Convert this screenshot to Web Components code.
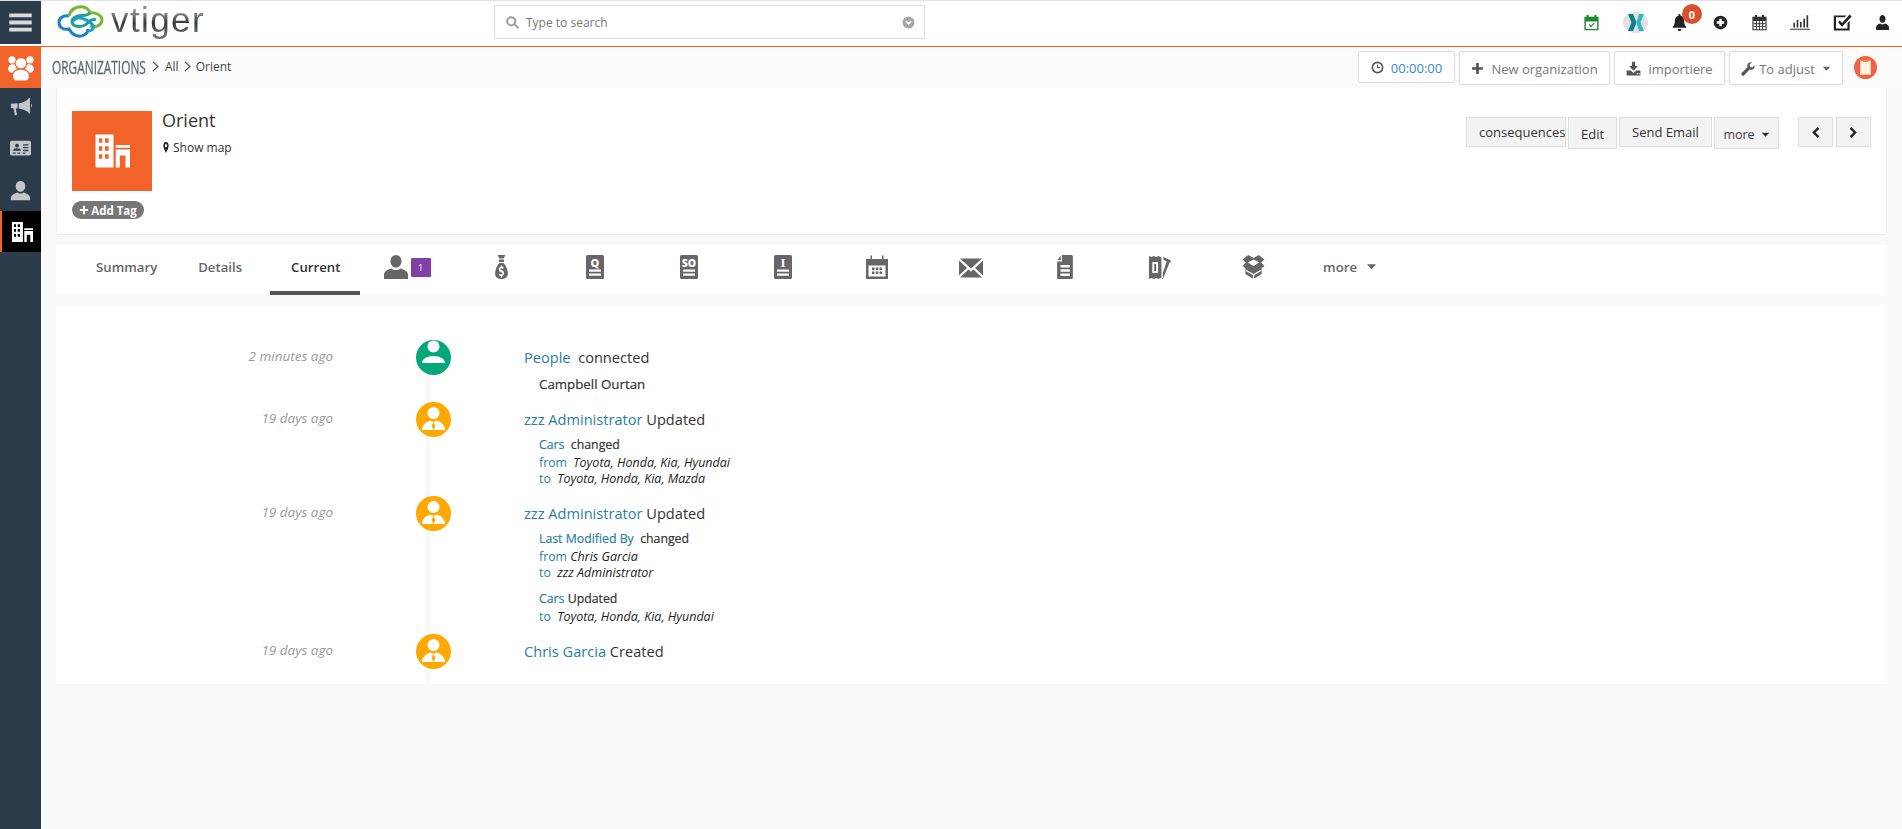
<!DOCTYPE html>
<html>
<head>
<meta charset="utf-8">
<title>Orient</title>
<style>
  html, body { margin: 0; padding: 0; height: 100%; background: #f9f9f9; overflow: hidden; }
  body { font-family: "Open Sans", "Liberation Sans", sans-serif; }
</style>
</head>
<body>
<vt-app></vt-app>
<script>
(function() {
  // icons are all drawn on a 24 box and use currentColor
  const ICONS = {
    user: '<path d="M12 1C8.600 1 6.500 3.800 6.500 7.200S8.700 13.500 12 13.500s5.500-2.900 5.500-6.300S15.400 1 12 1zM1 23v-2.500c0-3 3.500-5.200 7.300-6.300 1.100.7 2.300 1.100 3.700 1.100s2.600-.4 3.700-1.100c3.800 1.100 7.300 3.300 7.300 6.300V23z"/>',
    team: '<circle cx="12" cy="7.500" r="4.800"/><circle cx="3.700" cy="4.500" r="3.300"/><circle cx="20.300" cy="4.500" r="3.300"/><path d="M0 13c0-2.500 2-4.500 4.500-4.500.8 0 1.500.2 2 .4.300 1.700 1 3 2 3.800-1.700.8-3.500 2-4.500 4C1.700 16.200 0 14.700 0 13zM24 13c0-2.500-2-4.500-4.500-4.500-.8 0-1.500.2-2 .4-.3 1.700-1 3-2 3.800 1.700.8 3.500 2 4.500 4 2.300-.5 4-2 4-3.700zM4.700 19c0-3.500 3.300-5.500 7.300-5.500s7.300 2 7.300 5.500c0 3-1 4.500-3 4.500H7.700c-2 0-3-1.500-3-4.500z"/>',
    megaphone: '<path d="M20.500 2h1.300v17h-1.300l-.8-1.500C17 15.500 13 13.800 9.500 13.500v-5.500c3.500-.3 7.500-2 10.200-4.500zM23 8.500c1.300.5 1.300 3.500 0 4zM1 8.500l7.300-.5v5.500l-2 0L7.700 20.500 5.300 21 3.800 13.400 1 13z"/>',
    idcard: '<path fill-rule="evenodd" d="M2 3h20a2 2 0 0 1 2 2v13a2 2 0 0 1-2 2H2a2 2 0 0 1-2-2V5a2 2 0 0 1 2-2zm6 3.500a2.200 2.200 0 1 0 0 4.400 2.200 2.200 0 0 0 0-4.400zM3.500 14.500h9c0-2-2-2.900-4.500-2.900s-4.500.9-4.500 2.900zM15 7v1.600h6V7zm0 3.200v1.600h6v-1.600zm0 3.200V15h6v-1.600zM3.500 16.500V18h3v-1.500zm5 0V18h3v-1.500zm6 0V18h3v-1.500z"/>',
    building: '<path fill-rule="evenodd" d="M1 1h12v22H1zm2.300 2.500v3h2.200v-3zm4 0v3h2.500v-3zm-4 5.300v3h2.200v-3zm4 0v3h2.500v-3zm-4 5.300v3h2.200v-3zm4 0v3h2.500v-3zM14.500 8H24v1.800h-9.500zM14.500 11H24v12h-3v-8h-3.800v8h-2.700z"/>',
    bars: '<path d="M2 4h20v3.400H2zM2 10.300h20v3.400H2zM2 16.600h20V20H2z"/>',
    search: '<path d="M10 2a8 8 0 1 0 4.800 14.400l5.600 5.600 2.100-2.100-5.600-5.600A8 8 0 0 0 10 2zm0 3a5 5 0 1 1 0 10 5 5 0 0 1 0-10z"/>',
    chevdown: '<path fill-rule="evenodd" d="M12 1a11 11 0 1 0 0 22 11 11 0 0 0 0-22zM6 10.500l2.200-2.200 3.800 3.800 3.800-3.800 2.200 2.200-6 6z"/>',
    calcheck: '<path fill-rule="evenodd" d="M2 4h3V1.500h3V4h8V1.500h3V4h3v19H2zm2 6.500V21h16V10.500zM8 15.500l1.300-1.300 2 2 4-4 1.300 1.300-5.300 5.300z"/>',
    bell: '<path d="M12 0c.9 0 1.500.7 1.500 1.500V2.500c3.300.7 5 3.300 5 6.500 0 5 1.200 7 3 9v1.500h-19V18c1.800-2 3-4 3-9 0-3.200 1.700-5.800 5-6.500V1.500C10.500.7 11.100 0 12 0zM9.500 21h5c0 1.600-1.100 3-2.500 3S9.500 22.600 9.500 21z"/>',
    pluscircle: '<path fill-rule="evenodd" d="M12 1a11 11 0 1 0 0 22 11 11 0 0 0 0-22zM10 6h4v4h4v4h-4v4h-4v-4H6v-4h4z"/>',
    calendar: '<path fill-rule="evenodd" d="M2 4h3.500V1.500h3V4h7V1.500h3V4H22v19H2zm1.500 6v3h3.400v-3zm4.700 0v3h3.200v-3zm4.400 0v3h3.200v-3zm4.500 0v3h3.400v-3zM3.500 14.300v3h3.400v-3zm4.700 0v3h3.200v-3zm4.400 0v3h3.200v-3zm4.500 0v3h3.400v-3zM3.500 18.500v3h3.400v-3zm4.700 0v3h3.200v-3zm4.400 0v3h3.200v-3zm4.500 0v3h3.400v-3z"/>',
    chart: '<path d="M0 20h24v1.300H0zM4 13h2v5.500H4zM8 9.500h2v9H8zM12 12h2v6.500h-2zM16 8h2v10.500h-2zM19.800 4h2v14.500h-2z"/>',
    checkbox: '<path fill-rule="evenodd" d="M1 3h16l-2.200 2.500H3.800v14h14.500v-7l2.700-2.800V22H1zM8.500 9.500l3 3L21 2l2.500 2.300-12 13-5-5.500z"/>',
    person2: '<path d="M12 0C8.800 0 6.500 2.800 6.500 6.200s2.300 6.300 5.500 6.300 5.500-2.900 5.500-6.300S15.200 0 12 0zM0 24v-4.500c0-3 3.500-5 7.500-6 1.200 1 2.900 1.500 4.500 1.500s3.300-.5 4.500-1.500c4 1 7.500 3 7.500 6V24z"/>',
    clock: '<path fill-rule="evenodd" d="M12 1a11 11 0 1 0 0 22 11 11 0 0 0 0-22zm0 3a8 8 0 1 1 0 16 8 8 0 0 1 0-16zm-1 2.500V13h6v-2h-4V6.500z"/>',
    plus: '<path d="M9.500 2h5v7.500H22v5h-7.500V22h-5v-7.500H2v-5h7.500z"/>',
    download: '<path fill-rule="evenodd" d="M9.500 1h5v7H19l-7 7.500L5 8h4.500zM1 15h6.500l4.500 4 4.500-4H23v8H1zm16 4v2h2v-2zm3.200 0v2h1.500v-2z"/>',
    wrench: '<path d="M23 5.500c.8 3.200-.7 6.500-3.500 7.500-1.700.6-3.300.4-4.700-.3L5.500 22.500c-1.200 1.200-3 1.200-4.100 0-1.100-1.100-1.100-2.900.1-4l9.800-9.500c-.7-1.500-.8-3.200-.2-4.800C12.200 1.500 15.200 0 18.500.5L14.500 4.500l1 4 4 1z"/>',
    pin: '<path fill-rule="evenodd" d="M12 0C7.300 0 4 3.500 4 8c0 5 5 11 8 16 3-5 8-11 8-16 0-4.500-3.300-8-8-8zm0 4.500a3.500 3.500 0 1 1 0 7 3.500 3.500 0 0 1 0-7z"/>',
    left: '<path d="M16 2l3 3-7 7 7 7-3 3L6 12z"/>',
    right: '<path d="M8 2L5 5l7 7-7 7 3 3 10-10z"/>',
    bag: '<path fill-rule="evenodd" d="M6.500 0h11l-2.500 3.500h-6zM8.500 4.500h7V7h-7zM9 8h6c4 3 6 7.500 6 10.500S18 24 12 24s-9-2.500-9-5.500S5 11 9 8zm2 2.500v1.300c-1.700.3-2.800 1.300-2.800 2.800 0 1.700 1.500 2.300 3.800 3 1 .3 1.300.6 1.300 1s-.5.700-1.400.7c-1 0-2-.3-2.900-.9l-.8 1.600c.8.600 1.800.9 2.800 1v1.400h1.800v-1.500c1.800-.3 2.900-1.300 2.900-2.900 0-1.700-1.300-2.400-3.600-3.100-1.200-.4-1.500-.6-1.500-1s.4-.7 1.200-.7c.8 0 1.700.2 2.400.7l.8-1.600c-.7-.4-1.500-.7-2.300-.8v-1z"/>',
    mail: '<path d="M1 3.500h22L12 13.500zM0 5.500L8 13 0 20.500zM24 5.500L16 13l8 7.500zM9.500 14.500L12 16.800l2.500-2.300 8.500 8H1z"/>',
    file: '<path fill-rule="evenodd" d="M8 0h13a1.500 1.500 0 0 1 1.500 1.500v21A1.500 1.500 0 0 1 21 24H3a1.500 1.500 0 0 1-1.500-1.500V6.500H8zM6.500.5v4.500H2zM6 10v2.400h12.500V10zm0 4.300v2.400h12.500v-2.400zm0 4.300V21h12.500v-2.400z"/>',
    tabcal: '<path fill-rule="evenodd" d="M1 4h4.500V.5h1.500V4h10V.5h1.500V4H23v20H1zm2.500 6.500V21.500h17V10.500zM7 12.500h2.500V15H7zm3.800 0h2.500V15h-2.500zm3.700 0H17V15h-2.500zM7 16.500h2.500V19H7zm3.800 0h2.500V19h-2.500zm3.700 0H17V19h-2.500z"/>',
    ticket: '<path fill-rule="evenodd" d="M1 1l2.500 1L6 1l2.500 1L11 1l3 1.500v20L11 24l-2.500-1L6 24l-2.500-1L1 24zM4.500 7v11h6V7zm2 2h2v7h-2zM16 2l8 3.500-.8 2c-1 .3-1.500 1-1.500 2L15.500 24l-1.500 0 1.500-1V18l4-11.500L16 4.500z"/>',
    box: '<path fill-rule="evenodd" d="M6.500 0L12 3l5.500-3 6 4.500L20 7.500l3.500 3.500-3 2V19L12 24l-8.500-5v-6l-3-2L4 7.500.5 4.500zM12 4.500L6 7.500l6 3.500 6-3.500zM4 14.500v1.500l7.400 4.300V24h1.200v-3.700L20 16v-1.500l-8 4.600z"/>',
    caret: '<path d="M2 7h20L12 18z"/>'
  };

  class VtIcon extends HTMLElement {
    connectedCallback() {
      const size = this.getAttribute('size') || 16;
      const h = this.getAttribute('h') || size;
      const color = this.getAttribute('color') || 'currentColor';
      const root = this.attachShadow({ mode: 'open' });
      root.innerHTML = `
        <style>
          :host { display: inline-flex; line-height: 0; flex: none; color: ${color}; }
          svg { display: block; fill: currentColor; }
        </style>
        <svg width="${size}" height="${h}" viewBox="0 0 24 24" preserveAspectRatio="none">${ICONS[this.getAttribute('name')] || ''}</svg>`;
    }
  }

  // the small record icons of the tab strip which carry letters
  class VtRecordIcon extends HTMLElement {
    connectedCallback() {
      const font = this.getAttribute('font') || 'Open Sans';
      const root = this.attachShadow({ mode: 'open' });
      root.innerHTML = `
        <style>:host { display: inline-flex; flex: none; } svg { display: block; }</style>
        <svg width="18" height="24" viewBox="0 0 18 24">
          <rect width="18" height="24" rx="1.500" fill="#666"/>
          <text x="9" y="12" text-anchor="middle" font-family="${font}, sans-serif" font-weight="800" font-size="${this.getAttribute('fs') || 11}" fill="#fff">${this.getAttribute('letter')}</text>
          <rect x="3" y="14.500" width="12" height="2.200" fill="#fff"/>
          <rect x="3" y="18.500" width="12" height="2.200" fill="#fff"/>
        </svg>`;
    }
  }

  class VtLogo extends HTMLElement {
    connectedCallback() {
      const root = this.attachShadow({ mode: 'open' });
      root.innerHTML = `
        <style>
          :host { display: flex; align-items: flex-start; gap: 7px; }
          svg { display: block; }
          span {
            font: 400 35px "Liberation Sans", sans-serif;
            letter-spacing: 1.400px;
            background: linear-gradient(#8a8e92 30%, #33383c 58%, #6a6e72 85%);
            -webkit-background-clip: text; background-clip: text; color: transparent;
            display: block; margin-top: -3px;
          }
        </style>
        <svg width="47" height="36" viewBox="0 0 47 36" fill="none" stroke-width="3">
          <path d="M12 13C6 12 2 15 2 19.500 2 25 7 27 12 26c3 6 10 9 15 6 3-1.500 4-4 4-6" stroke="#1d7fc4"/>
          <path d="M12 13c1-6 7-10 14-9 4 .5 6 3 7 6 5-1 12 2 12 7 0 5-6 8-12 6" stroke="#7ab534"/>
          <path d="M33 10c-2 2-5 2.500-8 2.500-6 0-10 2.500-10 6s4 5 8 5c5 0 7-3 10-5.500 2-1.500 4-2 6-1" stroke="#1f9f8f"/>
          <path d="M15 19c4-6 9-4 12-3 3 1 6 3 8 5 3 3 1 7-4 7" stroke="#1aa0c8"/>
        </svg>
        <span>vtiger</span>`;
    }
  }

  class VtTopbar extends HTMLElement {
    connectedCallback() {
      const cell = (w, inner) => `<div class="cell" style="width:${w}px">${inner}</div>`;
      const root = this.attachShadow({ mode: 'open' });
      root.innerHTML = `
        <style>
          :host { display: flex; height: 46px; box-sizing: border-box; border-top: 1px solid #dfe2e6; background: #fff; }
          .burger { width: 41px; height: 43px; background: #2c3b49; display: flex; align-items: center; justify-content: center; color: #d8dadc; }
          .logo { margin-left: 16px; width: 437px; padding-top: 2px; }
          .search { width: 431px; height: 34px; margin-top: 4px; box-sizing: border-box; border: 1px solid #ddd; display: flex; align-items: center; padding: 0 9px 0 10px; gap: 6px; font-size: 12px; color: #777; }
          .search span { flex: 1; }
          .icons { margin-left: auto; display: flex; height: 42px; }
          .cell { display: flex; align-items: center; justify-content: center; position: relative; color: #222; }
          .badge { position: absolute; left: 24px; top: 3px; width: 20px; height: 20px; border-radius: 50%; background: #d9502e; color: #fff; font-size: 11px; font-weight: 700; display: flex; align-items: center; justify-content: center; }
          .x { width: 25px; height: 21px; border-radius: 50%; background: #dfe1e3; display: flex; align-items: center; justify-content: center; }
        </style>
        <div class="burger"><vt-icon name="bars" size="27"></vt-icon></div>
        <div class="logo"><vt-logo></vt-logo></div>
        <div class="search">
          <vt-icon name="search" size="15" color="#999"></vt-icon>
          <span>Type to search</span>
          <vt-icon name="chevdown" size="13" color="#a5a5a5"></vt-icon>
        </div>
        <div class="icons">
          ${cell(43, '<vt-icon name="calcheck" size="17" color="#1d8a2c"></vt-icon>')}
          ${cell(45, `<div class="x"><svg width="16" height="17" viewBox="0 0 16 17"><path d="M0 0h5l3.500 8.500L5 17H0l3.500-8.500z" fill="#0d7f8f"/><path d="M16 0h-5L8.500 8.500 11 17h5l-3.500-8.500z" fill="#32b6c4"/></svg></div>`)}
          ${cell(43, '<vt-icon name="bell" size="17" color="#222"></vt-icon><div class="badge">0</div>')}
          ${cell(38, '<vt-icon name="pluscircle" size="15" color="#222"></vt-icon>')}
          ${cell(40, '<vt-icon name="calendar" size="17" color="#333"></vt-icon>')}
          ${cell(42, '<vt-icon name="chart" size="20" color="#333"></vt-icon>')}
          ${cell(42, '<vt-icon name="checkbox" size="19" color="#222"></vt-icon>')}
          ${cell(39, '<vt-icon name="person2" size="13" h="15" color="#222"></vt-icon>')}
        </div>`;
    }
  }

  class VtSidebar extends HTMLElement {
    connectedCallback() {
      const root = this.attachShadow({ mode: 'open' });
      root.innerHTML = `
        <style>
          :host { display: block; width: 41px; background: #2c3b49; color: #c4c7ca; flex: none; }
          .mod { height: 41px; background: #f26329; color: #fff; display: flex; align-items: center; justify-content: center; }
          .item { display: flex; align-items: center; justify-content: center; }
          .active { background: #000; color: #fff; border-left: 2px solid #f26329; height: 41px; }
        </style>
        <div class="mod"><vt-icon name="team" size="26"></vt-icon></div>
        <div class="item" style="height:38px"><vt-icon name="megaphone" size="22"></vt-icon></div>
        <div class="item" style="height:44px"><vt-icon name="idcard" size="21"></vt-icon></div>
        <div class="item" style="height:41px"><vt-icon name="user" size="21"></vt-icon></div>
        <div class="item active"><vt-icon name="building" size="22"></vt-icon></div>`;
    }
  }

  class VtBtn extends HTMLElement {
    connectedCallback() {
      const root = this.attachShadow({ mode: 'open' });
      root.innerHTML = `
        <style>
          :host { display: flex; align-items: center; justify-content: center; gap: 7px; box-sizing: border-box; height: 34px; padding-top: 1px; background: #fff; border: 1px solid #ddd; border-radius: 2px; color: #777; font-size: 13px; flex: none; }
        </style>
        <slot></slot>`;
    }
  }

  class VtHeader extends HTMLElement {
    connectedCallback() {
      const chev = m => `<span class="sep" style="margin:${m}"><svg width="7" height="11" viewBox="0 0 7 11" fill="none" stroke="#555" stroke-width="1.200"><path d="M1 1l5 4.500L1 10"/></svg></span>`;
      const root = this.attachShadow({ mode: 'open' });
      root.innerHTML = `
        <style>
          :host { display: flex; align-items: center; box-sizing: border-box; height: 41px; background: #fbfbfb; padding: 0 25px 2px 11px; color: #444; font-size: 12px; }
          .title { font-size: 18px; color: #5b6875; -webkit-text-stroke: .3px #5b6875; display: inline-block; transform: scaleX(.66); transform-origin: left center; width: 94px; white-space: nowrap; }
          .sep svg { display: block; }
          .tools { margin-left: auto; display: flex; align-items: flex-start; gap: 4px; padding-top: 4px; align-self: stretch; }
          .timer { color: #2e8ad8; font-size: 13px; }
          .clip { margin: 5px 0 0 7px; display: block; }
        </style>
        <span class="title">ORGANIZATIONS</span>
        ${chev('0 6px')}
        <span>All</span>
        ${chev('0 5px')}
        <span>Orient</span>
        <div class="tools">
          <vt-btn style="width:97px;height:32px"><vt-icon name="clock" size="13" color="#555"></vt-icon><span class="timer">00:00:00</span></vt-btn>
          <vt-btn style="width:151px"><vt-icon name="plus" size="13" color="#555"></vt-icon><span>New organization</span></vt-btn>
          <vt-btn style="width:111px"><vt-icon name="download" size="15" color="#555"></vt-icon><span>importiere</span></vt-btn>
          <vt-btn style="width:114px;gap:4px"><vt-icon name="wrench" size="14" color="#555"></vt-icon><span>To adjust</span><vt-icon name="caret" size="9" color="#666" style="margin-left:3px"></vt-icon></vt-btn>
          <svg class="clip" width="23" height="23" viewBox="0 0 23 23">
            <circle cx="11.500" cy="11.500" r="11.500" fill="#ef6245"/>
            <rect x="6.500" y="5" width="10" height="13.500" fill="#fdf3e4" stroke="#f3c9a0"/>
            <rect x="9" y="3.500" width="5" height="2.500" fill="#e88a4a"/>
          </svg>
        </div>`;
    }
  }

  class VtGrayBtn extends HTMLElement {
    connectedCallback() {
      const root = this.attachShadow({ mode: 'open' });
      root.innerHTML = `
        <style>
          :host { display: flex; align-items: center; box-sizing: border-box; height: 30px; background: #f3f3f3; border: 1px solid #ddd; color: #333; font-size: 13px; flex: none; justify-content: center; white-space: nowrap; }
        </style>
        <slot></slot>`;
    }
  }

  class VtRecordCard extends HTMLElement {
    connectedCallback() {
      const root = this.attachShadow({ mode: 'open' });
      root.innerHTML = `
        <style>
          :host { display: flex; box-sizing: border-box; height: 147px; margin: 0 15px; background: #fff; border: 1px solid #eee; border-top: 0; padding: 23px 15px 0 15px; }
          .left { width: 80px; flex: none; }
          .sq { width: 80px; height: 80px; background: #f26329; color: #fff; display: flex; align-items: center; justify-content: center; }
          .tag { margin-top: 10px; width: 72px; height: 18px; border-radius: 9px; background: #777; color: #fff; font-size: 11.500px; font-weight: 700; display: flex; align-items: center; justify-content: center; gap: 2px; white-space: nowrap; }
          .info { margin-left: 10px; flex: 1; }
          .name { font-size: 18px; line-height: 20px; color: #333; margin-top: -1px; }
          .map { margin-top: 9px; display: flex; align-items: center; gap: 3px; font-size: 12px; color: #333; line-height: 17px; }
          .acts { display: flex; align-items: flex-start; gap: 2px; margin-top: 6px; }
        </style>
        <div class="left">
          <div class="sq"><vt-icon name="building" size="36"></vt-icon></div>
          <div class="tag"><vt-icon name="plus" size="10"></vt-icon>Add Tag</div>
        </div>
        <div class="info">
          <div class="name">Orient</div>
          <div class="map"><vt-icon name="pin" size="8" h="11" color="#222"></vt-icon>Show map</div>
        </div>
        <div class="acts">
          <vt-gray-btn style="width:100px;justify-content:flex-start;padding-left:12px">consequences</vt-gray-btn>
          <vt-gray-btn style="width:49px;height:32px;padding-top:2px">Edit</vt-gray-btn>
          <vt-gray-btn style="width:93px">Send Email</vt-gray-btn>
          <vt-gray-btn style="width:65px;height:32px;padding-top:2px;gap:6px;color:#444;font-size:12.500px">more<vt-icon name="caret" size="9" color="#333"></vt-icon></vt-gray-btn>
          <vt-gray-btn style="width:35px;margin-left:17px"><vt-icon name="left" size="13" color="#222"></vt-icon></vt-gray-btn>
          <vt-gray-btn style="width:35px;margin-left:1px"><vt-icon name="right" size="13" color="#222"></vt-icon></vt-gray-btn>
        </div>`;
    }
  }

  class VtTabs extends HTMLElement {
    connectedCallback() {
      const icon = inner => `<div class="i">${inner}</div>`;
      const root = this.attachShadow({ mode: 'open' });
      root.innerHTML = `
        <style>
          :host { display: flex; height: 50px; margin: 10px 15px 0; padding-left: 20px; background: #fff; color: #666; font-size: 13.200px; font-weight: 600; }
          .t { display: flex; align-items: center; padding: 0 20px 7px; box-sizing: border-box; }
          .cur { width: 90px; margin-left: 8px; padding: 0 0 3px 21px; border-bottom: 4px solid #555; color: #333; }
          .i { width: 94px; display: flex; align-items: center; justify-content: center; color: #666; padding-bottom: 6px; box-sizing: border-box; }
          .n { width: 20px; height: 19px; background: #8040a8; color: #fff; font-size: 9px; font-weight: 400; border-radius: 1px; display: flex; align-items: center; justify-content: center; margin-left: 3px; }
          .more { display: flex; align-items: center; gap: 9px; padding: 0 0 7px 23px; }
        </style>
        <div class="t" style="padding-right:21px">Summary</div>
        <div class="t">Details</div>
        <div class="t cur">Current</div>
        ${icon('<vt-icon name="person2" size="24"></vt-icon><div class="n">1</div>')}
        ${icon('<vt-icon name="bag" size="17" h="24"></vt-icon>')}
        ${icon('<vt-record-icon letter="Q"></vt-record-icon>')}
        ${icon('<vt-record-icon letter="SO" fs="10.500"></vt-record-icon>')}
        ${icon('<vt-record-icon letter="I" font="Liberation Serif" fs="13"></vt-record-icon>')}
        ${icon('<vt-icon name="tabcal" size="24"></vt-icon>')}
        ${icon('<vt-icon name="mail" size="24"></vt-icon>')}
        ${icon('<vt-icon name="file" size="18" h="24"></vt-icon>')}
        ${icon('<vt-icon name="ticket" size="23" h="24"></vt-icon>')}
        ${icon('<vt-icon name="box" size="23" h="24"></vt-icon>')}
        <div class="more">more<vt-icon name="caret" size="11"></vt-icon></div>`;
    }
  }

  class VtAvatar extends HTMLElement {
    connectedCallback() {
      const green = this.hasAttribute('green');
      const root = this.attachShadow({ mode: 'open' });
      root.innerHTML = `
        <style>:host { display: block; width: 35px; height: 35px; } svg { display: block; }</style>
        <svg width="35" height="35" viewBox="0 0 35 35">
          <circle cx="17.500" cy="17.500" r="17.500" fill="${green ? '#04a777' : '#ffa800'}"/>
          ${green
            ? '<circle cx="17.500" cy="6.500" r="6" fill="#fff"/><path d="M6 23c0-4 5-7 11.500-7S29 19 29 23z" fill="#fff"/>'
            : '<circle cx="17.500" cy="11" r="6" fill="#fff"/><path d="M6 28c0-5 4-8 8-9.500l3.500 1.500 3.500-1.500c4 1.500 8 4.500 8 9.500z" fill="#fff"/><path d="M17.500 20l2 4-2 4-2-4z" fill="#ffa800"/>'}
        </svg>`;
    }
  }

  // one line of the history: time, avatar, text
  class VtEntry extends HTMLElement {
    connectedCallback() {
      const root = this.attachShadow({ mode: 'open' });
      root.innerHTML = `
        <style>
          :host { display: grid; grid-template-columns: 360px 35px 1fr; height: var(--h, 94px); position: relative; }
          .time { box-sizing: border-box; text-align: right; font-style: italic; font-size: 13.500px; color: #999; padding: 8px 83px 0 0; line-height: 16px; }
          .body { padding-left: 73px; }
        </style>
        <div class="time">${this.getAttribute('time')}</div>
        <vt-avatar ${this.hasAttribute('green') ? 'green' : ''}></vt-avatar>
        <div class="body"><slot></slot></div>`;
    }
  }

  class VtTimeline extends HTMLElement {
    connectedCallback() {
      const root = this.attachShadow({ mode: 'open' });
      root.innerHTML = `
        <style>
          :host { display: block; margin: 10px 15px 0; background: #fff; height: 379px; box-sizing: border-box; padding-top: 35px; position: relative; overflow: hidden; font-size: 14.600px; color: #333; }
          .line { position: absolute; left: 370px; top: 70px; bottom: 0; width: 4px; background: #f7f7f7; }
          .a { color: #2d7ea0; }
          .title { line-height: 20px; padding-top: 7px; white-space: pre; }
          .sub { padding-left: 15px; font-size: 12.300px; line-height: 16px; white-space: pre; }
          .label { -webkit-text-stroke: .2px; }
          .sub i { color: #222; font-size: 12.500px; }
          .gap1 { padding-top: 8px; }
          .gap2 { padding-top: 10px; }
          .from { padding-top: 2px; }
          .name { font-size: 13.300px; -webkit-text-stroke: .2px; padding-top: 8px; line-height: 18px; }
        </style>
        <div class="line"></div>
        <vt-entry green time="2 minutes ago" style="--h:62px">
          <div class="title"><span class="a">People</span>  connected</div>
          <div class="sub name">Campbell Ourtan</div>
        </vt-entry>
        <vt-entry time="19 days ago" style="--h:94px">
          <div class="title"><span class="a">zzz Administrator</span> Updated</div>
          <div class="sub label gap1"><span class="a">Cars</span>  changed</div>
          <div class="sub from"><span class="a">from</span>  <i>Toyota, Honda, Kia, Hyundai</i></div>
          <div class="sub"><span class="a">to</span>  <i>Toyota, Honda, Kia, Mazda</i></div>
        </vt-entry>
        <vt-entry time="19 days ago" style="--h:138px">
          <div class="title"><span class="a">zzz Administrator</span> Updated</div>
          <div class="sub label gap1"><span class="a">Last Modified By</span>  changed</div>
          <div class="sub from"><span class="a">from</span> <i>Chris Garcia</i></div>
          <div class="sub"><span class="a">to</span>  <i>zzz Administrator</i></div>
          <div class="sub label gap2"><span class="a">Cars</span> Updated</div>
          <div class="sub from"><span class="a">to</span>  <i>Toyota, Honda, Kia, Hyundai</i></div>
        </vt-entry>
        <vt-entry time="19 days ago" style="--h:50px">
          <div class="title"><span class="a">Chris Garcia</span> Created</div>
        </vt-entry>`;
    }
  }

  class VtApp extends HTMLElement {
    connectedCallback() {
      const root = this.attachShadow({ mode: 'open' });
      root.innerHTML = `
        <style>
          :host { display: flex; flex-direction: column; height: 829px; }
          .rule { height: 1px; background: #f26329; flex: none; }
          .row { flex: 1; display: flex; min-height: 0; }
          .main { flex: 1; min-width: 0; }
        </style>
        <vt-topbar></vt-topbar>
        <div class="rule"></div>
        <div class="row">
          <vt-sidebar></vt-sidebar>
          <div class="main">
            <vt-header></vt-header>
            <vt-record-card></vt-record-card>
            <vt-tabs></vt-tabs>
            <vt-timeline></vt-timeline>
          </div>
        </div>`;
    }
  }

  customElements.define('vt-icon', VtIcon);
  customElements.define('vt-record-icon', VtRecordIcon);
  customElements.define('vt-logo', VtLogo);
  customElements.define('vt-btn', VtBtn);
  customElements.define('vt-gray-btn', VtGrayBtn);
  customElements.define('vt-topbar', VtTopbar);
  customElements.define('vt-sidebar', VtSidebar);
  customElements.define('vt-header', VtHeader);
  customElements.define('vt-record-card', VtRecordCard);
  customElements.define('vt-tabs', VtTabs);
  customElements.define('vt-avatar', VtAvatar);
  customElements.define('vt-entry', VtEntry);
  customElements.define('vt-timeline', VtTimeline);
  customElements.define('vt-app', VtApp);
})();
</script>
</body>
</html>
